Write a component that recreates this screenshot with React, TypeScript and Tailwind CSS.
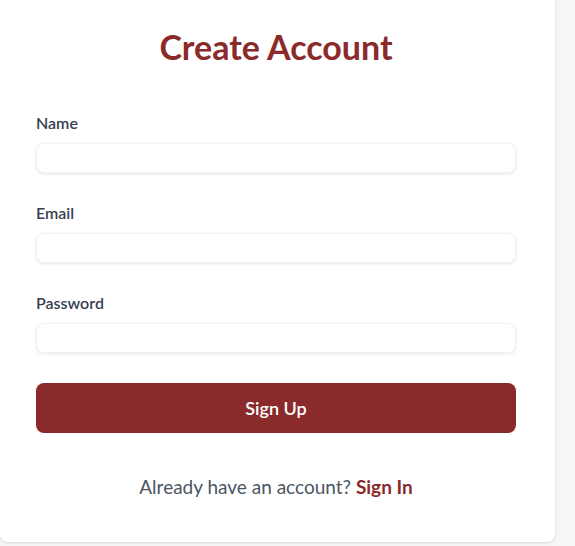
export default function App() {
  return (
    <div className="min-h-[546px] bg-[#f5f6f8] font-['Lato',sans-serif]">
      <div className="w-[555px] rounded-b-lg bg-white pb-[42px] pl-9 pr-[39px] pt-[22px] shadow-[0_1px_3px_rgba(0,0,0,0.12)]">
        <h1 className="text-center text-[34px] font-bold leading-[50px] text-[#8b2a2b]">Create Account</h1>

        <form className="mt-[40px]">
          <Field label="Name" type="text" />
          <Field label="Email" type="email" />
          <Field label="Password" type="password" />

          <button
            type="button"
            className="mt-[30px] h-[50px] w-full rounded-lg bg-[#8b2a2b] text-[18px] font-semibold text-white"
          >
            Sign Up
          </button>
        </form>

        <p className="mt-[41px] text-center text-[19px] leading-[26px] text-[#4b5563]">
          Already have an account? <a className="font-bold text-[#8b2a2b]">Sign In</a>
        </p>
      </div>
    </div>
  );
}

function Field({ label, type }: { label: string; type: string }) {
  return (
    <div className="mb-[29px] last-of-type:mb-0">
      <label className="mb-[10px] block pt-px text-[16px] font-semibold leading-5 text-[#374151]">{label}</label>
      <input
        type={type}
        className="block h-[30px] w-full rounded-lg border border-[#f3f3f3] bg-white px-3 shadow-[0_1px_3px_rgba(0,0,0,0.1)] outline-none"
      />
    </div>
  );
}
